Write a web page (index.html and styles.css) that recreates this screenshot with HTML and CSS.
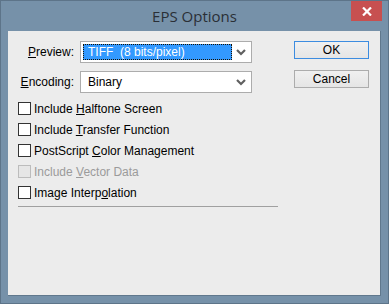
FILE: index.html
```html
<!DOCTYPE html>
<html lang="en">
<head>
    <meta charset="UTF-8">
    <title>EPS Options</title>
    <link rel="stylesheet" href="styles.css">
</head>
<body>
    <div class="window">
        <div class="titlebar">
            <span class="title">EPS Options</span>
            <button class="close-btn" aria-label="Close">
                <svg width="10" height="9" viewBox="0 0 10 9"><path d="M1 0.5 L9 8.5 M9 0.5 L1 8.5" stroke="#fff" stroke-width="2.2"/></svg>
            </button>
        </div>
        <div class="client">
            <div class="form">
                <div class="field">
                    <label class="field-label"><u>P</u>review:</label>
                    <div class="select focused">
                        <span class="select-value"><span class="highlight">TIFF&nbsp; (8 bits/pixel)</span></span>
                        <svg class="chevron" width="10" height="7" viewBox="0 0 10 7"><path d="M1 1 L5 5 L9 1" fill="none" stroke="#606060" stroke-width="2.2"/></svg>
                    </div>
                </div>
                <div class="field">
                    <label class="field-label"><u>E</u>ncoding:</label>
                    <div class="select">
                        <span class="select-value">Binary</span>
                        <svg class="chevron" width="10" height="7" viewBox="0 0 10 7"><path d="M1 1 L5 5 L9 1" fill="none" stroke="#606060" stroke-width="2.2"/></svg>
                    </div>
                </div>
                <div class="checks">
                    <label class="check"><span class="box"></span><span>Include <u>H</u>alftone Screen</span></label>
                    <label class="check"><span class="box"></span><span>Include <u>T</u>ransfer Function</span></label>
                    <label class="check"><span class="box"></span><span>PostScript <u>C</u>olor Management</span></label>
                    <label class="check disabled"><span class="box"></span><span>Include <u>V</u>ector Data</span></label>
                    <label class="check"><span class="box"></span><span>Image Interp<u>o</u>lation</span></label>
                </div>
                <div class="separator"></div>
            </div>
            <div class="actions">
                <button class="btn default">OK</button>
                <button class="btn">Cancel</button>
            </div>
        </div>
    </div>
</body>
</html>
```

FILE: styles.css
```css
body {
    margin: 0;
    font-family: "Liberation Sans", Arial, sans-serif;
    font-size: 12px;
    color: #000;
}

.window {
    width: 389px;
    height: 304px;
    box-sizing: border-box;
    background: #7691a9;
    border: 1px solid #5d7489;
    display: flex;
    flex-direction: column;
    padding: 0 7px 7px 7px;
}

.titlebar {
    height: 30px;
    display: flex;
    align-items: center;
    justify-content: center;
    position: relative;
}

.title {
    font-family: "Open Sans", "Noto Sans", sans-serif;
    font-size: 15px;
    color: #2a2f36;
    margin-top: -1px;
}

.close-btn {
    position: absolute;
    top: 0;
    right: -1px;
    width: 31px;
    height: 20px;
    border: none;
    padding: 0;
    background: #c75050;
    display: flex;
    align-items: center;
    justify-content: center;
}

.client {
    flex: 1;
    background: #ececec;
    border-right: 1px solid #60788d;
    border-bottom: 1px solid #60788d;
    display: flex;
    padding: 10px 0 0 10px;
}

.form {
    width: 260px;
}

.field {
    display: flex;
    align-items: center;
}

.field + .field {
    margin-top: 8px;
}

.field-label {
    width: 62px;
    padding-right: 6px;
    box-sizing: border-box;
    text-align: right;
}

.select {
    width: 172px;
    height: 22px;
    box-sizing: border-box;
    border: 1px solid #acacac;
    background: #fff;
    display: flex;
    align-items: center;
    justify-content: space-between;
    padding: 0 5px 0 2px;
}

.select-value {
    padding-left: 5px;
}

.select.focused .select-value {
    padding-left: 0;
    display: flex;
    height: 16px;
}

.highlight {
    background: #3399ff;
    color: #fff;
    outline: 1px dotted #1a1000;
    outline-offset: -1px;
    width: 149px;
    box-sizing: border-box;
    padding: 1px 5px 0;
    line-height: 15px;
}

.checks {
    margin-top: 5px;
}

.check {
    display: flex;
    align-items: center;
    height: 21px;
}

.box {
    width: 13px;
    height: 13px;
    box-sizing: border-box;
    border: 1px solid #333;
    background: #fff;
    margin-right: 3px;
}

.check.disabled {
    color: #9b9b9b;
}

.check.disabled .box {
    border-color: #bcbcbc;
    background: #e6e6e6;
}

.separator {
    margin-top: 3px;
    border-top: 1px solid #a0a0a0;
}

.actions {
    margin-left: 16px;
    display: flex;
    flex-direction: column;
    gap: 11px;
}

.btn {
    width: 75px;
    height: 18px;
    box-sizing: border-box;
    border: 1px solid #acacac;
    background: linear-gradient(#f0f0f0, #e5e5e5);
    font-family: "Liberation Sans", Arial, sans-serif;
    font-size: 12px;
    color: #000;
    padding: 0;
}

.btn.default {
    border-color: #3c8ce0;
}
```
